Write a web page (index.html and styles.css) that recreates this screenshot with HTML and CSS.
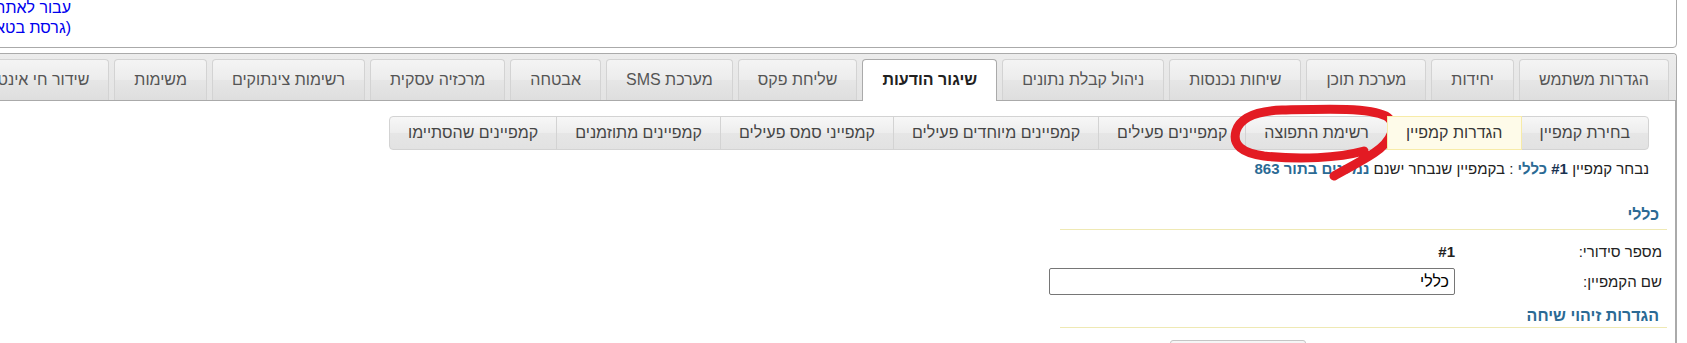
FILE: index.html
```html
<!DOCTYPE html>
<html lang="he" dir="rtl">
<head>
	<meta charset="UTF-8">
	<title>שיגור הודעות - הגדרות קמפיין</title>
	<link rel="stylesheet" href="styles.css">
</head>
<body>
	<div class="page">
		<div class="topbar">
			<div class="site-link">
				<a href="#">עבור לאתר הישן</a><br>
				<a href="#">(גרסת בטא)</a>
			</div>
		</div>

		<div class="tabs">
			<ul class="tabs-nav">
				<li><a href="#">הגדרות משתמש</a></li>
				<li><a href="#">יחידות</a></li>
				<li><a href="#">מערכת תוכן</a></li>
				<li><a href="#">שיחות נכנסות</a></li>
				<li><a href="#">ניהול קבלת נתונים</a></li>
				<li class="active"><a href="#">שיגור הודעות</a></li>
				<li><a href="#">שליחת פקס</a></li>
				<li><a href="#">מערכת SMS</a></li>
				<li><a href="#">אבטחה</a></li>
				<li><a href="#">מרכזיה עסקית</a></li>
				<li><a href="#">רשימות צינתוקים</a></li>
				<li><a href="#">משימות</a></li>
				<li><a href="#">שידור חי אינטרנט</a></li>
			</ul>

			<div class="tab-panel">
				<div class="subtabs">
					<a class="subtab" href="#">בחירת קמפיין</a>
					<a class="subtab selected" href="#">הגדרות קמפיין</a>
					<a class="subtab" href="#">רשימת התפוצה</a>
					<a class="subtab" href="#">קמפיינים פעילים</a>
					<a class="subtab" href="#">קמפיינים מיוחדים פעילים</a>
					<a class="subtab" href="#">קמפייני סמס פעילים</a>
					<a class="subtab" href="#">קמפיינים מתוזמנים</a>
					<a class="subtab" href="#">קמפיינים שהסתיימו</a>
				</div>

				<div class="status">
					נבחר קמפיין <b class="num">#1</b> <b class="name">כללי</b> : בקמפיין שנבחר ישנם <b class="name">נמענים בתור 863</b>
				</div>

				<table class="form">
					<colgroup>
						<col class="label-col">
						<col>
					</colgroup>
					<tr class="section">
						<th colspan="2">כללי</th>
					</tr>
					<tr class="first">
						<td class="label">מספר סידורי:</td>
						<td class="value"><b>#1</b></td>
					</tr>
					<tr>
						<td class="label">שם הקמפיין:</td>
						<td class="value"><input type="text" value="כללי"></td>
					</tr>
					<tr class="section second">
						<th colspan="2">הגדרות זיהוי שיחה</th>
					</tr>
					<tr class="first">
						<td class="label"></td>
						<td class="value"><button type="button">שמור</button></td>
					</tr>
				</table>
			</div>
		</div>

		<!-- annotation drawn over the screenshot -->
		<svg class="scribble" viewBox="1217 0 460 200" width="460" height="200">
			<path d="M1334 176 C1348 168 1362 161 1374 153 C1392 141 1399 124 1386 116 C1368 107 1322 109 1282 110 C1255 111 1240 118 1236 131 C1232 145 1242 153 1264 156 C1300 160 1338 158 1364 151" fill="none" stroke="#e31b23" stroke-width="9" stroke-linecap="round" stroke-linejoin="round"/>
		</svg>
	</div>
</body>
</html>
```

FILE: styles.css
```css
html {
	overflow: hidden;
}

body {
	margin: 0;
	font-family: "Liberation Sans", Arial, sans-serif;
	font-size: 16px;
	color: #222;
	background: #fff;
}

.page {
	position: relative;
	display: flow-root;
	width: 1880px;
	margin-right: 10px;
}

/* top strip */
.topbar {
	margin-top: -8px;
	padding: 5px 0 9px;
	border: 1px solid #aaa;
	border-radius: 0 0 4px 4px;
	display: flex;
	justify-content: flex-end;
}

.site-link {
	width: 273px;
	line-height: 20px;
}

.site-link a {
	color: #0000ee;
	text-decoration: none;
}

/* main tabs */
.tabs {
	margin-top: 5px;
	border: 1px solid #aaa;
	border-radius: 4px;
	border-bottom: none;
}

.tabs-nav {
	display: flex;
	gap: 5px;
	list-style: none;
	margin: 0;
	padding: 5px 7px 0 0;
	background: linear-gradient(#ececec, #e3e3e3);
	border-bottom: 1px solid #aaa;
	border-radius: 4px 4px 0 0;
}

.tabs-nav li {
	border: 1px solid #d3d3d3;
	border-bottom: none;
	border-radius: 4px 4px 0 0;
	background: linear-gradient(#f4f4f4, #ececec 50%, #e6e6e6 51%, #dedede);
	white-space: nowrap;
}

.tabs-nav a {
	display: block;
	padding: 11px 19px;
	line-height: 18px;
	color: #555;
	text-decoration: none;
}

.tabs-nav li.active {
	background: #fff;
	border-color: #aaa;
	margin-bottom: -1px;
	padding-bottom: 1px;
}

.tabs-nav li.active a {
	color: #212121;
	font-weight: bold;
}

.tab-panel {
	padding: 15px 8px 0 0;
	border-right: 1px solid #aaa;
	height: 260px;
}

/* campaign sub tabs */
.subtabs {
	display: flex;
	margin-right: 18px;
}

.subtab {
	position: relative;
	padding: 7px 18px;
	line-height: 18px;
	border: 1px solid #d3d3d3;
	background: linear-gradient(#f7f7f7, #ededed 50%, #e6e6e6 51%, #e2e2e2);
	color: #454545;
	text-decoration: none;
	white-space: nowrap;
}

.subtab + .subtab {
	margin-right: -1px;
}

.subtab:first-child {
	border-radius: 0 4px 4px 0;
}

.subtab:last-child {
	border-radius: 4px 0 0 4px;
}

.subtab.selected {
	z-index: 1;
	background: #fefbe9;
	border-color: #f7eba8;
	color: #363636;
}

.status {
	margin: 10px 18px 0 0;
	line-height: 18px;
	font-size: 15px;
	color: #222;
}

.status .num {
	color: #1a3352;
}

.status .name {
	color: #2b6a94;
}

/* form */
.form {
	table-layout: fixed;
	width: 607px;
	margin-top: 22px;
	border-collapse: collapse;
	font-size: 15px;
}

.form .label-col {
	width: 210px;
}

.form th {
	padding: 5px 8px 4px 0;
	height: 20px;
	line-height: 20px;
	text-align: right;
	font-size: 16px;
	color: #2b6a94;
	border-bottom: 1px solid #efe9b4;
}

.form tr.second th {
	padding-top: 8px;
	padding-bottom: 1px;
}

.form td {
	padding: 3px 0;
	line-height: 20px;
	vertical-align: middle;
}

.form tr.first td {
	padding-top: 12px;
}

.form .label {
	padding-right: 5px;
	color: #222;
}

.form .value {
	padding-right: 2px;
	white-space: nowrap;
}

.form input {
	box-sizing: border-box;
	width: 406px;
	height: 27px;
	padding: 2px 5px;
	border: 1px solid #767676;
	border-radius: 2px;
	font-family: inherit;
	font-size: 16px;
	color: #000;
}

.form button {
	width: 136px;
	height: 30px;
	margin-right: 149px;
	border: 1px solid #c5c5c5;
	border-radius: 3px;
	background: linear-gradient(#f6f6f6, #e3e3e3);
	font-family: inherit;
	font-size: 15px;
	color: #454545;
}

.scribble {
	position: absolute;
	top: 0;
	right: 0;
	pointer-events: none;
}
```
